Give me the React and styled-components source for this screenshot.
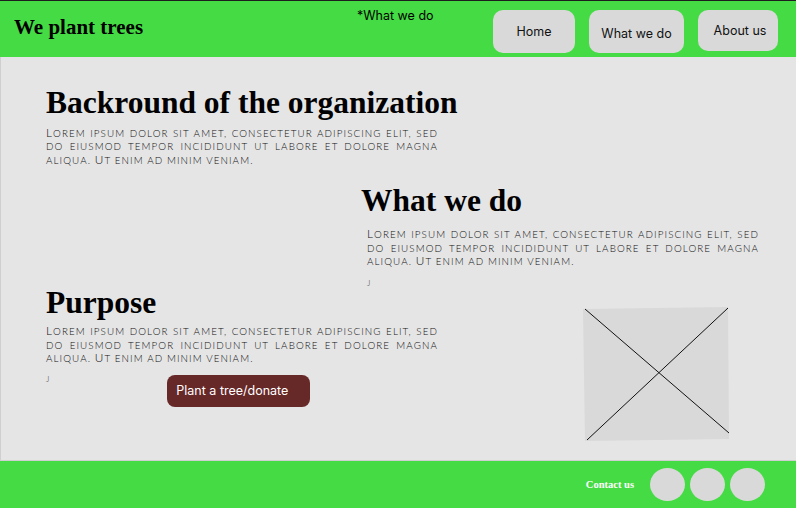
import React from "react";
import styled, { createGlobalStyle } from "styled-components";

const GlobalStyle = createGlobalStyle`
  html, body {
    margin: 0;
    padding: 0;
    background: #e5e5e5;
  }
  body {
    width: 796px;
    height: 508px;
    overflow: hidden;
    font-family: "Inter", "Liberation Sans", sans-serif;
  }
`;

const Page = styled.div`
  width: 796px;
  height: 508px;
  display: flex;
  flex-direction: column;
  border-top: 1px solid #1e1e1e;
  box-sizing: border-box;
`;

const Header = styled.header`
  height: 56px;
  flex: none;
  background: #44db44;
  display: flex;
  align-items: flex-start;
  padding: 0 18px 0 14px;
  box-sizing: border-box;
`;

const Logo = styled.h1`
  margin: 14px 0 0;
  font-family: "Liberation Serif", serif;
  font-weight: 700;
  font-size: 21px;
  color: #000;
  width: 343px;
`;

const Note = styled.span`
  margin-top: 7px;
  font-size: 12.5px;
  color: #000;
`;

const Nav = styled.nav`
  margin-left: auto;
  margin-top: 9px;
  display: flex;
  gap: 14px;
`;

const NavButton = styled.button`
  width: ${(p) => p.$w}px;
  height: ${(p) => p.$h || 43}px;
  border: none;
  border-radius: 10px;
  background: #d9d9d9;
  font-family: "Inter", "Liberation Sans", sans-serif;
  font-size: 12.5px;
  color: #111;
  padding: ${(p) => p.$drop || 0}px 0 0 ${(p) => p.$shift || 0}px;
  box-sizing: border-box;
`;

const Main = styled.main`
  flex: 1;
  min-height: 0;
  overflow: hidden;
  border-left: 1px solid #cfcfcf;
  border-bottom: 1px solid #cfcfcf;
  padding: 26px 0 0 45px;
  display: flex;
  flex-direction: column;
`;

const Section = styled.section`
  width: ${(p) => p.$w || 395}px;
  margin: ${(p) => p.$top || 0}px 0 0 ${(p) => p.$offset || 0}px;
`;

const Heading = styled.h2`
  margin: 0;
  font-family: "Liberation Serif", serif;
  font-weight: 700;
  font-size: 31.5px;
  line-height: 36px;
  white-space: nowrap;
  color: #000;
`;

const Body = styled.p`
  margin: ${(p) => p.$top || 0}px 0 0 ${(p) => p.$indent || 0}px;
  width: 392px;
  font-family: "Lato", "DejaVu Sans", sans-serif;
  font-weight: 300;
  text-transform: uppercase;
  font-size: 9.8px;
  line-height: 13.4px;
  letter-spacing: 1.1px;
  text-align: justify;
  color: #111;
`;

const Cap = styled.span`
  font-size: 11.8px;
  line-height: 1;
`;

const Mark = styled.div`
  margin: ${(p) => p.$top || 8}px 0 0 ${(p) => p.$indent || 0}px;
  font-family: "Lato", sans-serif;
  font-weight: 300;
  font-size: 8px;
  line-height: 10px;
  color: #333;
`;

const PurposeRow = styled.div`
  display: flex;
  align-items: flex-start;
`;

const ActionRow = styled.div`
  display: flex;
  align-items: flex-start;
`;

const DonateButton = styled.button`
  margin: ${(p) => p.$top || 0}px 0 0 118px;
  width: 143px;
  height: 32px;
  border: none;
  border-radius: 8px;
  background: #672828;
  color: #fff;
  font-family: "Inter", "Liberation Sans", sans-serif;
  font-size: 12.5px;
  text-align: left;
  padding: 0 0 0 9px;
`;

const Placeholder = styled.svg`
  margin: ${(p) => p.$top || 0}px 0 0 142px;
  flex: none;
`;

const Footer = styled.footer`
  height: 47px;
  flex: none;
  background: #44db44;
  display: flex;
  align-items: center;
  justify-content: flex-end;
  padding-right: 31px;
`;

const Contact = styled.span`
  font-family: "Liberation Serif", serif;
  font-weight: 700;
  font-size: 10.5px;
  color: #fff;
  margin-right: 16px;
`;

const Circles = styled.div`
  display: flex;
  gap: 5px;
`;

const Circle = styled.span`
  width: 35px;
  height: 33px;
  border-radius: 50%;
  background: #d9d9d9;
`;

function Lorem(props) {
  return (
    <Body {...props}>
      <Cap>L</Cap>orem ipsum dolor sit amet, consectetur adipiscing elit, sed do
      eiusmod tempor incididunt ut labore et dolore magna aliqua. <Cap>U</Cap>t
      enim ad minim veniam.
    </Body>
  );
}

export default function App() {
  return (
    <>
      <GlobalStyle />
      <Page>
        <Header>
          <Logo>We plant trees</Logo>
          <Note>*What we do</Note>
          <Nav>
            <NavButton $w={82}>Home</NavButton>
            <NavButton $w={95} $drop={4}>What we do</NavButton>
            <NavButton $w={80} $h={41} $shift={4}>About us</NavButton>
          </Nav>
        </Header>
        <Main>
          <Section $top={2}>
            <Heading>Backround of the organization</Heading>
            <Lorem $top={6} />
          </Section>
          <Section $offset={315} $w={400} $top={16}>
            <Heading>What we do</Heading>
            <Lorem $top={9} $indent={6} />
            <Mark $top={10} $indent={6}>J</Mark>
          </Section>
          <PurposeRow>
            <Section $top={-3}>
              <Heading>Purpose</Heading>
              <Lorem $top={4} />
              <ActionRow>
                <Mark $top={8}>J</Mark>
                <DonateButton $top={9}>Plant a tree/donate</DonateButton>
              </ActionRow>
            </Section>
            <Placeholder $top={19} width="147" height="134" viewBox="0 0 147 134">
              <polygon points="0,2 145,0 146,132 2,134" fill="#d9d9d9" />
              <line x1="2" y1="2" x2="146" y2="126" stroke="#111" strokeWidth="1" />
              <line x1="145" y1="1" x2="4" y2="133" stroke="#111" strokeWidth="1" />
            </Placeholder>
          </PurposeRow>
        </Main>
        <Footer>
          <Contact>Contact us</Contact>
          <Circles>
            <Circle />
            <Circle />
            <Circle />
          </Circles>
        </Footer>
      </Page>
    </>
  );
}
